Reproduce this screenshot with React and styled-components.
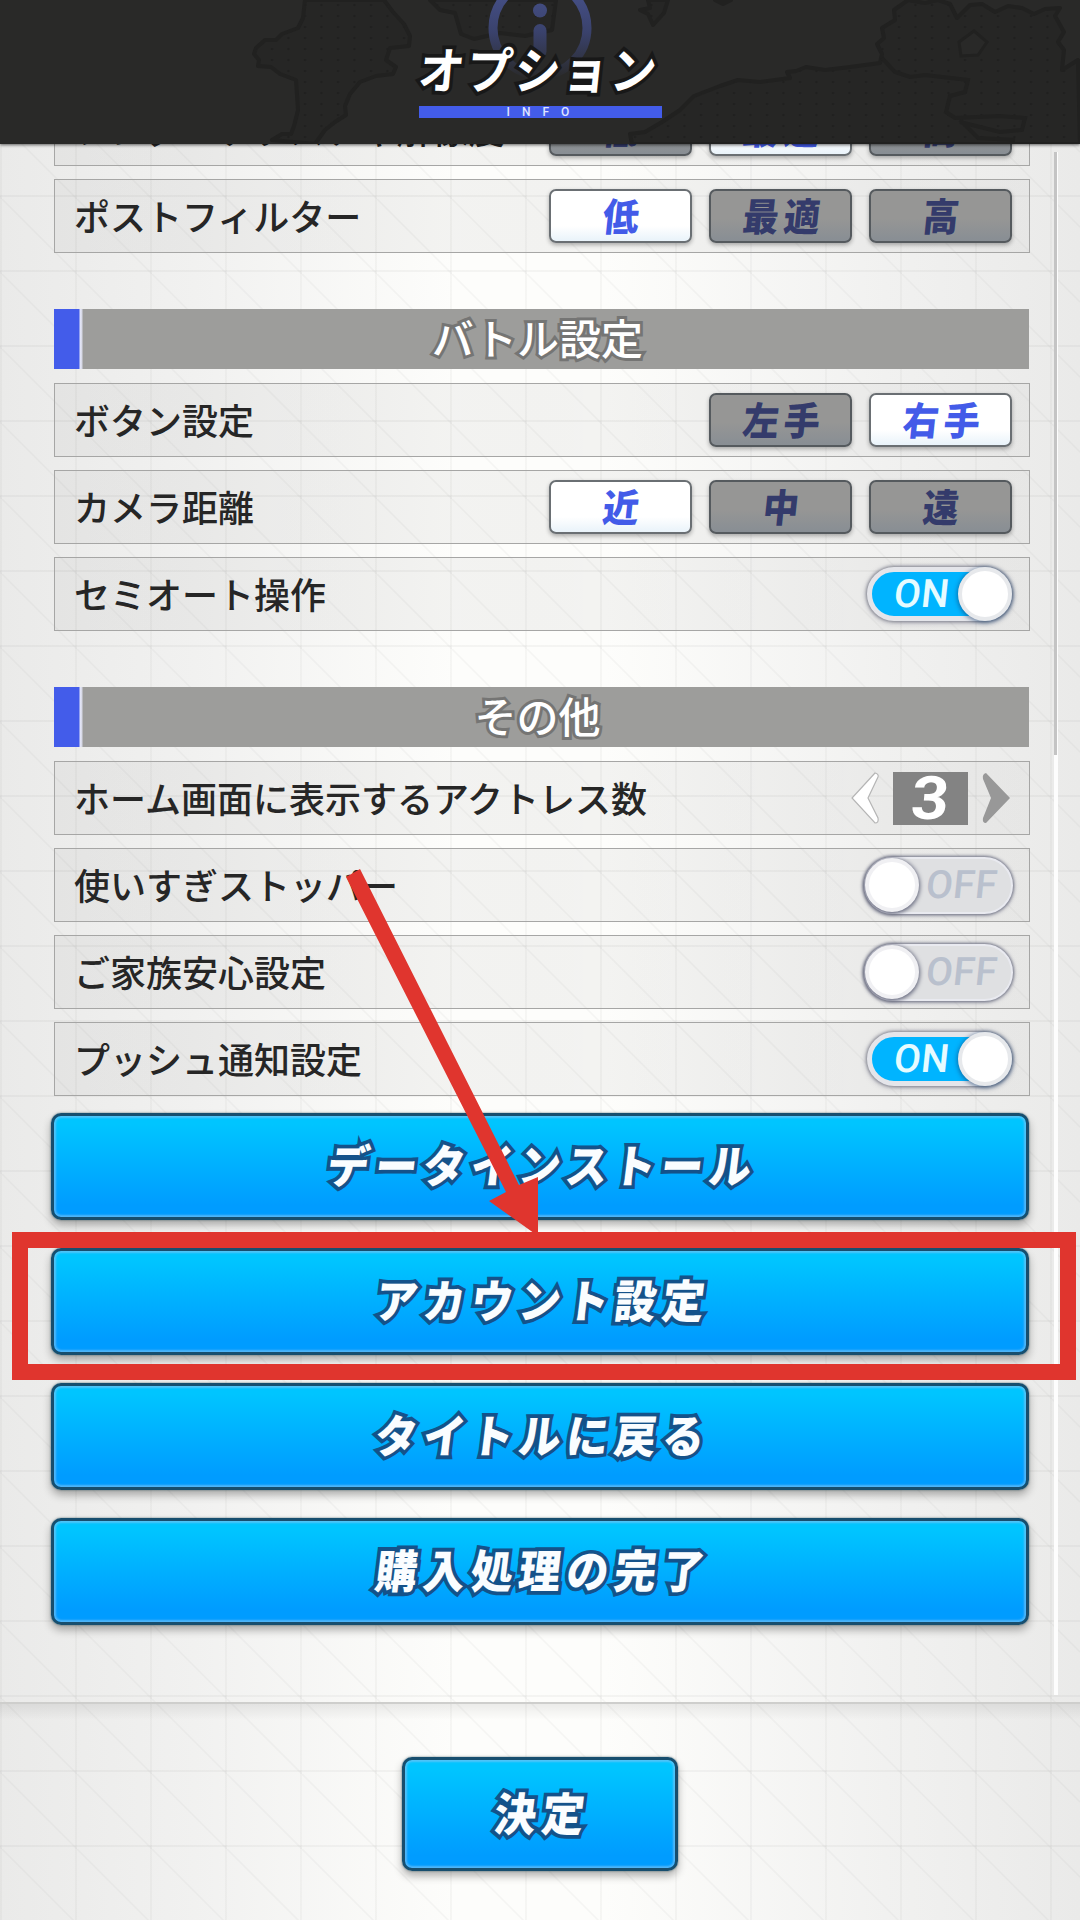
import React from "react";
import styled, { createGlobalStyle, css } from "styled-components";

const Global = createGlobalStyle`
  * { box-sizing: border-box; }
  html, body { margin: 0; padding: 0; background: #f4f4f2; }
  button { font: inherit; margin: 0; padding: 0; }
`;

const Screen = styled.main`
  position: relative;
  width: 1080px;
  height: 1920px;
  overflow: hidden;
  display: flex;
  flex-direction: column;
  font-family: "Noto Sans CJK JP", "Noto Sans", sans-serif;
  color: #262626;
  background:
    linear-gradient(to right, rgba(130, 130, 125, 0.06) 2px, transparent 2px) 0 0 / 75px 75px,
    linear-gradient(to bottom, rgba(130, 130, 125, 0.07) 2px, transparent 2px) 0 45px / 75px 75px,
    linear-gradient(to top right, transparent 49%, rgba(130, 130, 125, 0.06) 49.5%, rgba(130, 130, 125, 0.06) 50.5%, transparent 51%) 2px 49px / 75px 75px,
    linear-gradient(to right, #eaeae9 0%, #f1f1f0 18%, #fdfdfb 42%, #fdfdfb 56%, #f1f1f0 82%, #eaeae9 100%);
`;

const Header = styled.header`
  position: relative;
  z-index: 2;
  flex: none;
  height: 144px;
  display: flex;
  flex-direction: column;
  align-items: center;
  padding-top: 36px;
  background: #292928;
  box-shadow: 0 1px 3px rgba(0, 0, 0, 0.6);
`;

const HeaderArt = styled.svg`
  position: absolute;
  inset: 0;
  width: 1080px;
  height: 144px;
`;

const Title = styled.h1`
  position: relative;
  margin: 0;
  height: 70px;
  line-height: 63px;
  font-size: 46px;
  font-weight: 700;
  letter-spacing: 2px;
  color: #fff;
  -webkit-text-stroke: 7px #181818;
  paint-order: stroke fill;
  span {
    display: inline-block;
    transform: translateX(-1px) skewX(-6deg) scaleY(1.08);
  }
`;

const Ribbon = styled.div`
  position: relative;
  width: 243px;
  height: 12px;
  background: #435cea;
  color: #dfe4ff;
  font: 500 12px/12px Roboto, sans-serif;
  letter-spacing: 12px;
  text-align: center;
  padding-left: 8px;
`;

const List = styled.section`
  flex: none;
  height: 1558px;
  overflow: hidden;
  display: flex;
  justify-content: space-between;
  padding: 0 22px 0 54px;
`;

const Content = styled.div`
  width: 976px;
  flex: none;
  margin-top: -52px;
  display: flex;
  flex-direction: column;
  gap: 13px;
`;

const ScrollTrack = styled.div`
  flex: none;
  width: 4px;
  height: 1543px;
  margin-top: 8px;
  background: #fdfdfd;
`;

const ScrollThumb = styled.div`
  width: 3px;
  height: 603px;
  background: #c4c4c4;
`;

const Row = styled.div`
  height: 74px;
  flex: none;
  display: flex;
  align-items: center;
  justify-content: space-between;
  padding: 0 17px 0 19px;
  border: 1px solid #a6a6a5;
  background: linear-gradient(to right, rgba(0, 0, 0, 0.035), rgba(0, 0, 0, 0.045) 50%, rgba(0, 0, 0, 0.025));
`;

const Label = styled.span`
  font-size: 36px;
  line-height: 50px;
  padding-bottom: 3px;
  font-weight: 500;
  white-space: nowrap;
`;

const SectionHead = styled.h2`
  flex: none;
  height: 60px;
  margin: 43px 1px 1px 0;
  display: flex;
  align-items: center;
  justify-content: center;
  background: linear-gradient(to right, #435cea 25px, #e6e8fa 26px, #d5d7e4 28px, #9d9d9b 29px);
  color: #fff;
  font-size: 42px;
  font-weight: 500;
  line-height: 60px;
  -webkit-text-stroke: 6px #757574;
  paint-order: stroke fill;
  span { transform: translate(-4px, -2px); }
`;

const Choices = styled.div`
  display: flex;
  gap: 17px;
`;

const Choice = styled.button`
  width: 143px;
  height: 54px;
  border: 2px solid #555a5e;
  border-radius: 7px;
  font-size: 36px;
  line-height: 44px;
  font-weight: 900;
  box-shadow: 0 2px 4px rgba(0, 0, 0, 0.3);
  ${(p) =>
    p.$on
      ? css`
          color: #435be8;
          border-color: #6a6f73;
          background: linear-gradient(#fff 70%, #e9f3fa);
        `
      : css`
          color: #343b6b;
          background: linear-gradient(#969695 55%, #888e94);
        `}
  span {
    display: inline-block;
    height: 48px;
    transform: translateX(1px) skewX(-6deg) scaleY(1.07);
    letter-spacing: ${(p) => (p.$wide ? 5 : 0)}px;
    margin-right: ${(p) => (p.$wide ? -5 : 0)}px;
  }
`;

const Toggle = styled.button`
  position: relative;
  width: ${(p) => (p.$on ? 145 : 149)}px;
  height: ${(p) => (p.$on ? 54 : 57)}px;
  margin-right: ${(p) => (p.$on ? 0 : -1)}px;
  border-radius: 30px;
  display: flex;
  align-items: center;
  font: 500 39px/44px Roboto, sans-serif;
  ${(p) =>
    p.$on
      ? css`
          justify-content: flex-start;
          padding-left: 22px;
          border: 5px solid #e4e5ea;
          background: #00b4ff;
          color: #e6fbff;
          box-shadow: 0 0 3px 1px #8a8c96, 0 1px 6px rgba(60, 60, 90, 0.4);
        `
      : css`
          justify-content: flex-end;
          padding-right: 14px;
          border: 2px solid #e9eaf0;
          background: #dfe0e2;
          color: #b9c0cd;
          box-shadow: 0 0 3px 1px #777a8b, 0 1px 5px rgba(60, 60, 90, 0.4);
        `}
  span {
    transform: skewX(-6deg);
    letter-spacing: 0.5px;
  }
`;

const Knob = styled.i`
  position: absolute;
  top: ${(p) => (p.$on ? -5 : -1)}px;
  ${(p) => (p.$on ? "right: -5px" : "left: -1px")};
  width: 54px;
  height: 54px;
  border-radius: 50%;
  border: 4px solid ${(p) => (p.$on ? "#e7e9ec" : "#f0f0f3")};
  background: #fff;
  box-shadow: 0 1px 4px 1px ${(p) => (p.$on ? "rgba(20, 60, 110, 0.55)" : "#62657a")};
`;

const Stepper = styled.div`
  display: flex;
  align-items: center;
  gap: 14px;
  margin-right: 2px;
`;

const Arrow = styled.svg`
  width: 28px;
  height: 52px;
  overflow: visible;
`;

const Count = styled.div`
  width: 75px;
  height: 53px;
  background: #838383;
  color: #fff;
  text-align: center;
  font: 700 60px/54px Roboto, sans-serif;
  span {
    display: inline-block;
    transform: skewX(-5deg) scaleX(1.1);
  }
`;

const Actions = styled.div`
  display: flex;
  flex-direction: column;
  gap: 28px;
  margin: 4px 1px 0 -3px;
`;

const blueButton = css`
  border: 3px solid #174e6e;
  border-radius: 10px;
  background: linear-gradient(#00c5ff 8%, #009cff 88%);
  box-shadow: inset 0 0 2px 2px rgba(125, 195, 245, 0.65), 0 0 2px rgba(20, 60, 70, 0.7), 0 5px 8px rgba(0, 0, 0, 0.3);
  color: #fafdff;
  font-size: 42px;
  font-weight: 900;
  letter-spacing: 5.8px;
  -webkit-text-stroke: 7px #14528a;
  paint-order: stroke fill;
  span {
    display: inline-block;
    margin-right: -5.8px;
    transform: skewX(-7deg) scaleY(1.08);
  }
`;

const Action = styled.button`
  ${blueButton}
  height: 107px;
  line-height: 90px;
  padding-bottom: 6px;
`;

const Footer = styled.footer`
  flex: 1;
  display: flex;
  justify-content: center;
  align-items: flex-start;
  padding-top: 53px;
  border-top: 2px solid #cececc;
  background: linear-gradient(rgba(0, 0, 0, 0.07), transparent 16px);
`;

const Decide = styled.button`
  ${blueButton}
  width: 276px;
  height: 114px;
  line-height: 97px;
  padding-bottom: 6px;
`;

const Frame = styled.div`
  position: absolute;
  z-index: 3;
  left: 12px;
  top: 1232px;
  width: 1064px;
  height: 148px;
  border: 16px solid #e0352e;
`;

const Pointer = styled.svg`
  position: absolute;
  z-index: 3;
  left: 340px;
  top: 864px;
  width: 210px;
  height: 376px;
`;

function ChoiceRow({ label, options, value }) {
  return (
    <Row>
      <Label>{label}</Label>
      <Choices>
        {options.map((o) => (
          <Choice key={o} $on={o === value} $wide={o.length > 1}>
            <span>{o}</span>
          </Choice>
        ))}
      </Choices>
    </Row>
  );
}

function ToggleRow({ label, on }) {
  return (
    <Row>
      <Label>{label}</Label>
      <Toggle $on={on}>
        <span>{on ? "ON" : "OFF"}</span>
        <Knob $on={on} />
      </Toggle>
    </Row>
  );
}

function MapArt() {
  return (
    <HeaderArt viewBox="0 0 1080 144">
      <defs>
        <pattern id="dots" width="16.5" height="11" patternUnits="userSpaceOnUse">
          <circle cx="8" cy="5" r="1.3" fill="#20201f" />
        </pattern>
        <linearGradient id="fade" x1="0" y1="0" x2="0" y2="80" gradientUnits="userSpaceOnUse">
          <stop offset="0" stopColor="#434d82" />
          <stop offset="0.4" stopColor="#3a426c" />
          <stop offset="1" stopColor="#292928" />
        </linearGradient>
        <g id="land">
          <path d="M305 0L303 18L298 28L282 34L276 40L265 40L256 48L254 54L259 60L258 66L271 67L280 74L296 80L298 110L294 126L291 134L282 134L272 140L315 144L325 130L335 122L346 115L345 106L350 94L360 82L376 76L393 74L396 67L386 60L390 48L409 46L410 36L404 24L393 12L384 0Z" />
          <path d="M430 0L440 10L455 13L461 34L474 39L500 33L525 36L552 30L556 0Z" />
          <path d="M648 0L650 8L640 10L648 14L653 25L664 13L668 0Z M715 0L723 4L731 0Z" />
          <path d="M632 144L630 134L645 132L662 122L680 110L694 96L720 86L738 80L760 82L790 78L787 72L796 71L806 67L825 70L850 67L880 63L882 54L877 44L884 38L882 28L895 20L894 10L908 0L925 3L938 0L950 4L957 18L970 5L982 4L995 12L1008 6L1022 8L1034 14L1045 9L1060 8L1055 16L1064 32L1058 42L1064 50L1062 70L1078 60L1080 144Z" />
        </g>
      </defs>
      <use href="#land" fill="#262625" stroke="#212120" strokeWidth="4" strokeLinejoin="round" />
      <use href="#land" fill="url(#dots)" />
      <path d="M959 42L974 31L987 42L978 55L961 56Z" fill="#292928" stroke="#212120" strokeWidth="3" />
      <path d="M882 58L895 72L910 77L925 75L968 80L965 92L950 96L946 112L955 118L1000 116L1025 118L1022 130L1000 132L960 122M960 120L978 138L1015 140" fill="none" stroke="#212120" strokeWidth="4" />
      <ellipse cx="540" cy="28" rx="47" ry="47" fill="none" stroke="url(#fade)" strokeWidth="9" />
      <circle cx="540" cy="10.5" r="7" fill="url(#fade)" />
      <rect x="533.5" y="24" width="13" height="34" rx="6.5" fill="url(#fade)" />
    </HeaderArt>
  );
}

const levels = ["低", "最適", "高"];
const actions = ["データインストール", "アカウント設定", "タイトルに戻る", "購入処理の完了"];

export default function App() {
  return (
    <>
      <Global />
      <Screen>
        <Header>
          <MapArt />
          <Title><span>オプション</span></Title>
          <Ribbon>INFO</Ribbon>
        </Header>
        <List>
          <Content>
            <ChoiceRow label="レンダーテクスチャ解像度" options={levels} value="最適" />
            <ChoiceRow label="ポストフィルター" options={levels} value="低" />
            <SectionHead><span>バトル設定</span></SectionHead>
            <ChoiceRow label="ボタン設定" options={["左手", "右手"]} value="右手" />
            <ChoiceRow label="カメラ距離" options={["近", "中", "遠"]} value="近" />
            <ToggleRow label="セミオート操作" on />
            <SectionHead><span>その他</span></SectionHead>
            <Row>
              <Label>ホーム画面に表示するアクトレス数</Label>
              <Stepper>
                <Arrow viewBox="0 0 28 52">
                  <path d="M24 1Q28 2 27 5L17 26L27 46Q28 51 24 51L1 26Z" fill="#fff" stroke="#b5b5b5" strokeWidth="1.2" />
                </Arrow>
                <Count><span>3</span></Count>
                <Arrow viewBox="0 0 28 52">
                  <path d="M4 1Q0 2 1 7L9 26L1 46Q0 51 4 51L28 26Z" fill="#989898" />
                </Arrow>
              </Stepper>
            </Row>
            <ToggleRow label="使いすぎストッパー" on={false} />
            <ToggleRow label="ご家族安心設定" on={false} />
            <ToggleRow label="プッシュ通知設定" on />
            <Actions>
              {actions.map((a) => (
                <Action key={a}><span>{a}</span></Action>
              ))}
            </Actions>
          </Content>
          <ScrollTrack>
            <ScrollThumb />
          </ScrollTrack>
        </List>
        <Footer>
          <Decide><span>決定</span></Decide>
        </Footer>
        <Frame />
        <Pointer viewBox="340 864 210 376">
          <path d="M346 877L360 869L519 1185L538 1177L538 1236L489 1201L506 1192Z" fill="#e0352e" />
        </Pointer>
      </Screen>
    </>
  );
}
